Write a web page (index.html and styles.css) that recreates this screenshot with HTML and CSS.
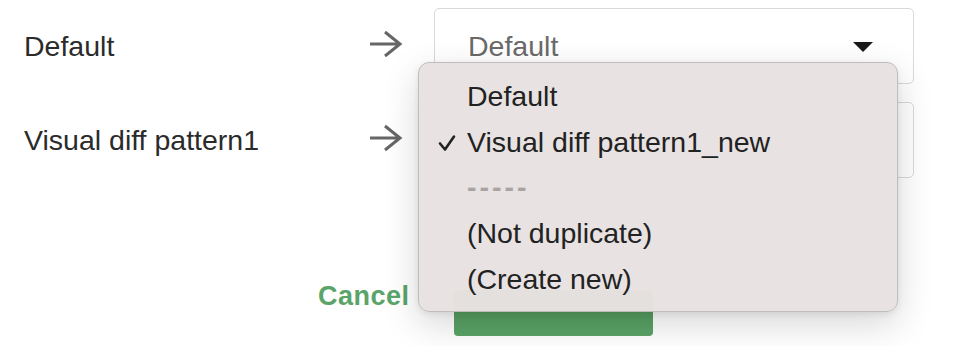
FILE: index.html
```html
<!DOCTYPE html>
<html lang="en">
<head>
    <meta charset="UTF-8">
    <meta name="viewport" content="width=device-width, initial-scale=1.0">
    <title>Map duplicates</title>
    <link rel="stylesheet" href="styles.css">
</head>
<body>
    <div class="dialog">
        <div class="mapping">
            <div class="row">
                <span class="source">Default</span>
                <svg class="arrow" width="36" height="32" viewBox="0 0 36 32">
                    <path d="M3 15 H33 M18 3 L33 15 L18 27" fill="none" stroke="#666" stroke-width="3"/>
                </svg>
                <div class="select">
                    <span>Default</span>
                    <span class="caret"></span>
                </div>
            </div>
            <div class="row">
                <span class="source">Visual diff pattern1</span>
                <svg class="arrow" width="36" height="32" viewBox="0 0 36 32">
                    <path d="M3 15 H33 M18 3 L33 15 L18 27" fill="none" stroke="#666" stroke-width="3"/>
                </svg>
                <!-- value is shown in the open popup below -->
                <div class="select is-open"></div>
            </div>
        </div>

        <div class="actions">
            <a class="cancel" href="#">Cancel</a>
            <button class="apply" type="button" aria-label="Apply"></button>
        </div>

        <!-- open popup of the second select -->
        <ul class="menu">
            <li>Default</li>
            <li class="checked">
                <svg class="check" width="18" height="18" viewBox="0 0 18 18">
                    <path d="M2 9.5 L7 15.5 L16 2.5" fill="none" stroke="#222" stroke-width="2.6" stroke-linecap="round" stroke-linejoin="round"/>
                </svg>
                Visual diff pattern1_new
            </li>
            <li class="separator">-----</li>
            <li>(Not duplicate)</li>
            <li>(Create new)</li>
        </ul>
    </div>
</body>
</html>
```

FILE: styles.css
```css
* {
    margin: 0;
    padding: 0;
    box-sizing: border-box;
}
body {
    font-family: 'Liberation Sans', Arial, sans-serif;
    color: #2b2b2b;
    background: #fff;
    width: 954px;
    height: 346px;
    overflow: hidden;
}
.dialog {
    position: relative;
    padding-top: 8px;
}
.mapping {
    display: flex;
    flex-direction: column;
    gap: 18px;
    padding-left: 24px;
}
.row {
    display: grid;
    grid-template-columns: 343px 67px 480px;
    align-items: center;
    height: 76px;
    font-size: 28.5px;
}
.arrow {
    margin-top: -2px;
}
.select {
    height: 76px;
    border: 1px solid #d9d9d9;
    border-radius: 5px;
    display: flex;
    align-items: center;
    justify-content: space-between;
    padding: 0 40px 0 33px;
    color: #6a6a6a;
}
.caret {
    width: 0;
    height: 0;
    border-left: 10px solid transparent;
    border-right: 10px solid transparent;
    border-top: 10px solid #1a1a1a;
    margin-top: 2px;
}
.actions {
    display: flex;
    align-items: flex-start;
    gap: 44px;
    padding-left: 318px;
    margin-top: 112px;
}
.cancel {
    color: #5aa469;
    font-weight: bold;
    font-size: 27px;
    letter-spacing: 0.5px;
    text-decoration: none;
    margin-top: -9px;
}
.apply {
    width: 199px;
    height: 46px;
    border: none;
    border-radius: 4px;
    background: linear-gradient(#559a5c, #5aa467);
}
.menu {
    position: absolute;
    left: 418px;
    top: 62px;
    width: 480px;
    height: 250px;
    list-style: none;
    padding: 11px 0 8px;
    background: rgba(231, 225, 225, 0.975);
    border: 1px solid #c2bdbd;
    border-radius: 11px;
    box-shadow: 0 12px 36px rgba(0, 0, 0, 0.16), 0 2px 6px rgba(0, 0, 0, 0.08);
    font-size: 28.5px;
    color: #222;
}
.menu li {
    position: relative;
    height: 45.7px;
    line-height: 45.7px;
    padding-left: 48px;
}
.check {
    position: absolute;
    left: 19px;
    top: 14px;
}
.menu .separator {
    color: #a9a3a3;
    font-weight: bold;
    letter-spacing: 3px;
}
```
